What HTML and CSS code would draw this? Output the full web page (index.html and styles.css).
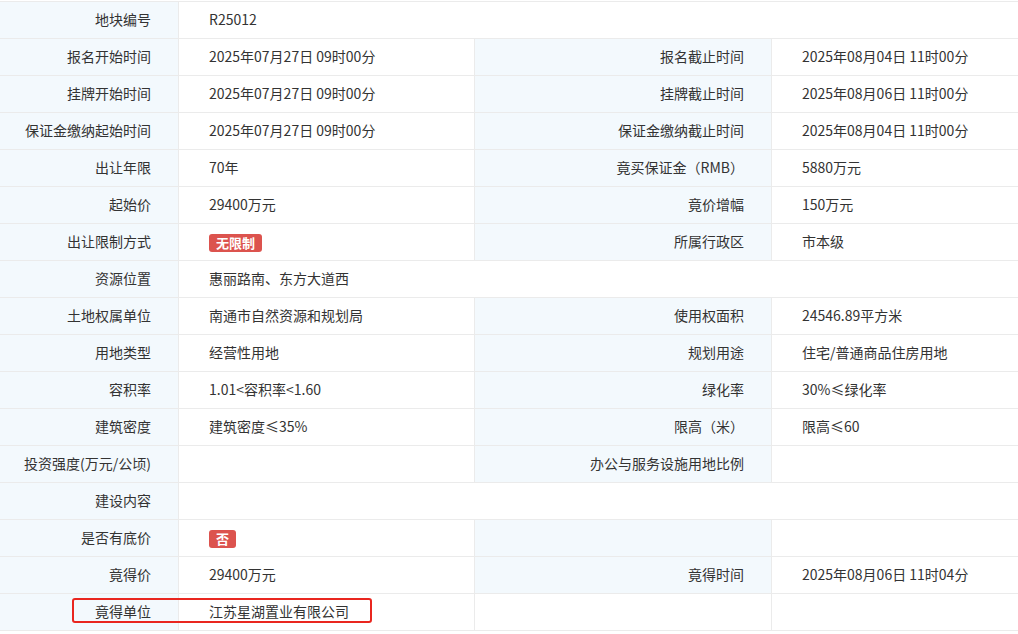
FILE: index.html
```html
<!DOCTYPE html>
<html lang="zh-CN">
<head>
<meta charset="utf-8">
<title>地块信息</title>
<link rel="stylesheet" href="styles.css">
</head>
<body>
<div class="wrap">
<table class="info">
  <colgroup>
    <col class="c1"><col class="c2"><col class="c3"><col class="c4">
  </colgroup>
  <tbody>
    <tr><th>地块编号</th><td colspan="3">R25012</td></tr>
    <tr><th>报名开始时间</th><td>2025年07月27日 09时00分</td><th>报名截止时间</th><td>2025年08月04日 11时00分</td></tr>
    <tr><th>挂牌开始时间</th><td>2025年07月27日 09时00分</td><th>挂牌截止时间</th><td>2025年08月06日 11时00分</td></tr>
    <tr><th>保证金缴纳起始时间</th><td>2025年07月27日 09时00分</td><th>保证金缴纳截止时间</th><td>2025年08月04日 11时00分</td></tr>
    <tr><th>出让年限</th><td>70年</td><th>竟买保证金（RMB）</th><td>5880万元</td></tr>
    <tr><th>起始价</th><td>29400万元</td><th>竟价增幅</th><td>150万元</td></tr>
    <tr><th>出让限制方式</th><td><span class="badge">无限制</span></td><th>所属行政区</th><td>市本级</td></tr>
    <tr><th>资源位置</th><td colspan="3">惠丽路南、东方大道西</td></tr>
    <tr><th>土地权属单位</th><td>南通市自然资源和规划局</td><th>使用权面积</th><td>24546.89平方米</td></tr>
    <tr><th>用地类型</th><td>经营性用地</td><th>规划用途</th><td>住宅/普通商品住房用地</td></tr>
    <tr><th>容积率</th><td>1.01&lt;容积率&lt;1.60</td><th>绿化率</th><td>30%≤绿化率</td></tr>
    <tr><th>建筑密度</th><td>建筑密度≤35%</td><th>限高（米）</th><td>限高≤60</td></tr>
    <tr><th>投资强度(万元/公顷)</th><td></td><th>办公与服务设施用地比例</th><td></td></tr>
    <tr><th>建设内容</th><td colspan="3"></td></tr>
    <tr><th>是否有底价</th><td><span class="badge">否</span></td><th></th><td></td></tr>
    <tr><th>竟得价</th><td>29400万元</td><th>竟得时间</th><td>2025年08月06日 11时04分</td></tr>
    <tr class="last"><th>竟得单位</th><td>江苏星湖置业有限公司</td><td></td><td></td></tr>
  </tbody>
</table>
<div class="highlight"></div>
</div>
</body>
</html>
```
FILE: styles.css
```css
html, body {
  margin: 0;
  padding: 0;
  background: #fff;
}
body {
  font-family: "Noto Sans CJK SC", "Microsoft YaHei", sans-serif;
  font-size: 14px;
  color: #333;
}
.wrap {
  position: relative;
  padding-top: 1px;
  width: 1018px;
  overflow: hidden;
}
.info {
  border-collapse: collapse;
  table-layout: fixed;
  width: 1020px;
  margin-left: -1px;
}
.c1 { width: 179px; }
.c2 { width: 296px; }
.c3 { width: 297px; }
.c4 { width: 248px; }
.info th, .info td {
  border: 1px solid #ebebeb;
  height: 36px;
  padding: 0 0 2px 0;
  font-weight: normal;
  line-height: 20px;
  white-space: nowrap;
  box-sizing: border-box;
}
.info tr { height: 37px; }
.info th {
  background: #f3f9fd;
  text-align: right;
  padding-right: 27px;
}
.info td {
  background: #fff;
  text-align: left;
  padding-left: 30px;
}
.badge {
  display: inline-block;
  background: #dc534e;
  color: #fff;
  font-weight: bold;
  font-size: 13px;
  line-height: 18px;
  padding: 0 7px;
  border-radius: 3px;
  vertical-align: middle;
}
.highlight {
  position: absolute;
  left: 72px;
  top: 598px;
  width: 300px;
  height: 25px;
  box-sizing: border-box;
  border: 2px solid #e9261f;
  border-radius: 3px;
}
```
